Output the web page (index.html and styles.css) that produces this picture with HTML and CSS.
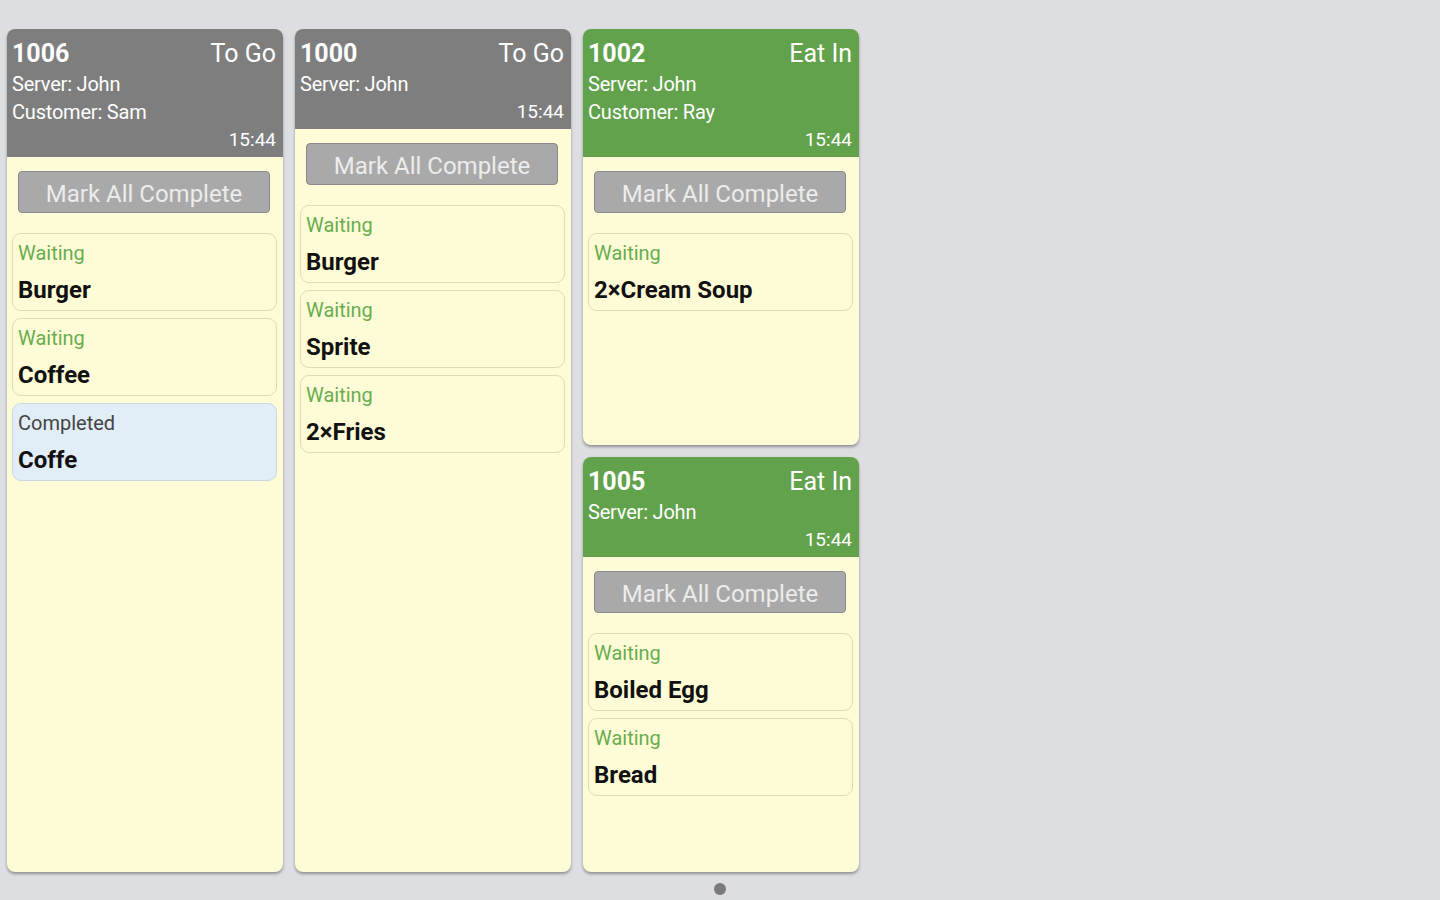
FILE: index.html
```html
<!DOCTYPE html>
<html>
<head>
<meta charset="utf-8">
<link rel="stylesheet" href="styles.css">
</head>
<body>
<div class="board">
  <div class="col">
    <div class="ticket">
      <div class="head gray">
        <div class="row"><span class="num">1006</span><span class="type">To Go</span></div>
        <div class="meta">Server: John</div>
        <div class="meta">Customer: Sam</div>
        <div class="time">15:44</div>
      </div>
      <div class="body">
        <div class="btn">Mark All Complete</div>
        <div class="item"><div class="status">Waiting</div><div class="name">Burger</div></div>
        <div class="item"><div class="status">Waiting</div><div class="name">Coffee</div></div>
        <div class="item done"><div class="status">Completed</div><div class="name">Coffe</div></div>
      </div>
    </div>
  </div>
  <div class="col">
    <div class="ticket">
      <div class="head gray">
        <div class="row"><span class="num">1000</span><span class="type">To Go</span></div>
        <div class="meta">Server: John</div>
        <div class="time">15:44</div>
      </div>
      <div class="body">
        <div class="btn">Mark All Complete</div>
        <div class="item"><div class="status">Waiting</div><div class="name">Burger</div></div>
        <div class="item"><div class="status">Waiting</div><div class="name">Sprite</div></div>
        <div class="item"><div class="status">Waiting</div><div class="name">2×Fries</div></div>
      </div>
    </div>
  </div>
  <div class="col">
    <div class="ticket">
      <div class="head green">
        <div class="row"><span class="num">1002</span><span class="type">Eat In</span></div>
        <div class="meta">Server: John</div>
        <div class="meta">Customer: Ray</div>
        <div class="time">15:44</div>
      </div>
      <div class="body">
        <div class="btn">Mark All Complete</div>
        <div class="item"><div class="status">Waiting</div><div class="name">2×Cream Soup</div></div>
      </div>
    </div>
    <div class="ticket">
      <div class="head green">
        <div class="row"><span class="num">1005</span><span class="type">Eat In</span></div>
        <div class="meta">Server: John</div>
        <div class="time">15:44</div>
      </div>
      <div class="body">
        <div class="btn">Mark All Complete</div>
        <div class="item"><div class="status">Waiting</div><div class="name">Boiled Egg</div></div>
        <div class="item"><div class="status">Waiting</div><div class="name">Bread</div></div>
      </div>
    </div>
  </div>
</div>
<div class="pager"><span class="dot"></span></div>
</body>
</html>
```
FILE: styles.css
```css
html, body {
  margin: 0;
  padding: 0;
  height: 100%;
}
body {
  background: #dcdee2;
  font-family: Roboto, "Noto Sans", "Liberation Sans", sans-serif;
  overflow: hidden;
}
.board {
  display: flex;
  gap: 12px;
  padding: 29px 0 0 7px;
  height: 843px;
}
.col {
  width: 276px;
  display: flex;
  flex-direction: column;
  gap: 12px;
}
.ticket {
  flex: 1;
  background: #fefcd6;
  border-radius: 8px;
  box-shadow: 0 2px 3px rgba(0, 0, 0, 0.35);
  overflow: hidden;
  display: flex;
  flex-direction: column;
}
.head {
  color: #fff;
  padding: 9px 7px 3px 5px;
}
.head.gray { background: #7e7e7e; }
.head.green { background: #62a24c; }
.row {
  display: flex;
  justify-content: space-between;
  align-items: baseline;
  height: 32px;
  line-height: 32px;
}
.num {
  font-weight: bold;
  font-size: 25px;
}
.type {
  font-size: 25px;
}
.meta {
  font-size: 20px;
  line-height: 28px;
  height: 28px;
  letter-spacing: -0.2px;
}
.time {
  font-size: 19px;
  line-height: 28px;
  height: 28px;
  text-align: right;
}
.body {
  padding: 14px 6px 0 5px;
  display: flex;
  flex-direction: column;
  gap: 7px;
}
.btn {
  margin: 0 7px 13px 6px;
  height: 40px;
  line-height: 44px;
  overflow: visible;
  background: #a9a9a9;
  border: 1px solid #8a8a8a;
  border-radius: 4px;
  color: #ececec;
  font-size: 24px;
  text-align: center;
}
.item {
  height: 78px;
  box-sizing: border-box;
  border: 1px solid #deddb4;
  border-radius: 9px;
  padding: 5px 6px 0 5px;
}
.item.done {
  background: #e2eef7;
  border-color: #c9d8e6;
}
.status {
  font-size: 20px;
  line-height: 28px;
  color: #6aac52;
}
.done .status {
  color: #444;
}
.name {
  margin-top: 5px;
  font-size: 24px;
  line-height: 36px;
  font-weight: bold;
  color: #111;
}
.pager {
  display: flex;
  justify-content: center;
  padding-top: 11px;
}
.dot {
  width: 12px;
  height: 12px;
  border-radius: 50%;
  background: #7a7a7a;
}
```
